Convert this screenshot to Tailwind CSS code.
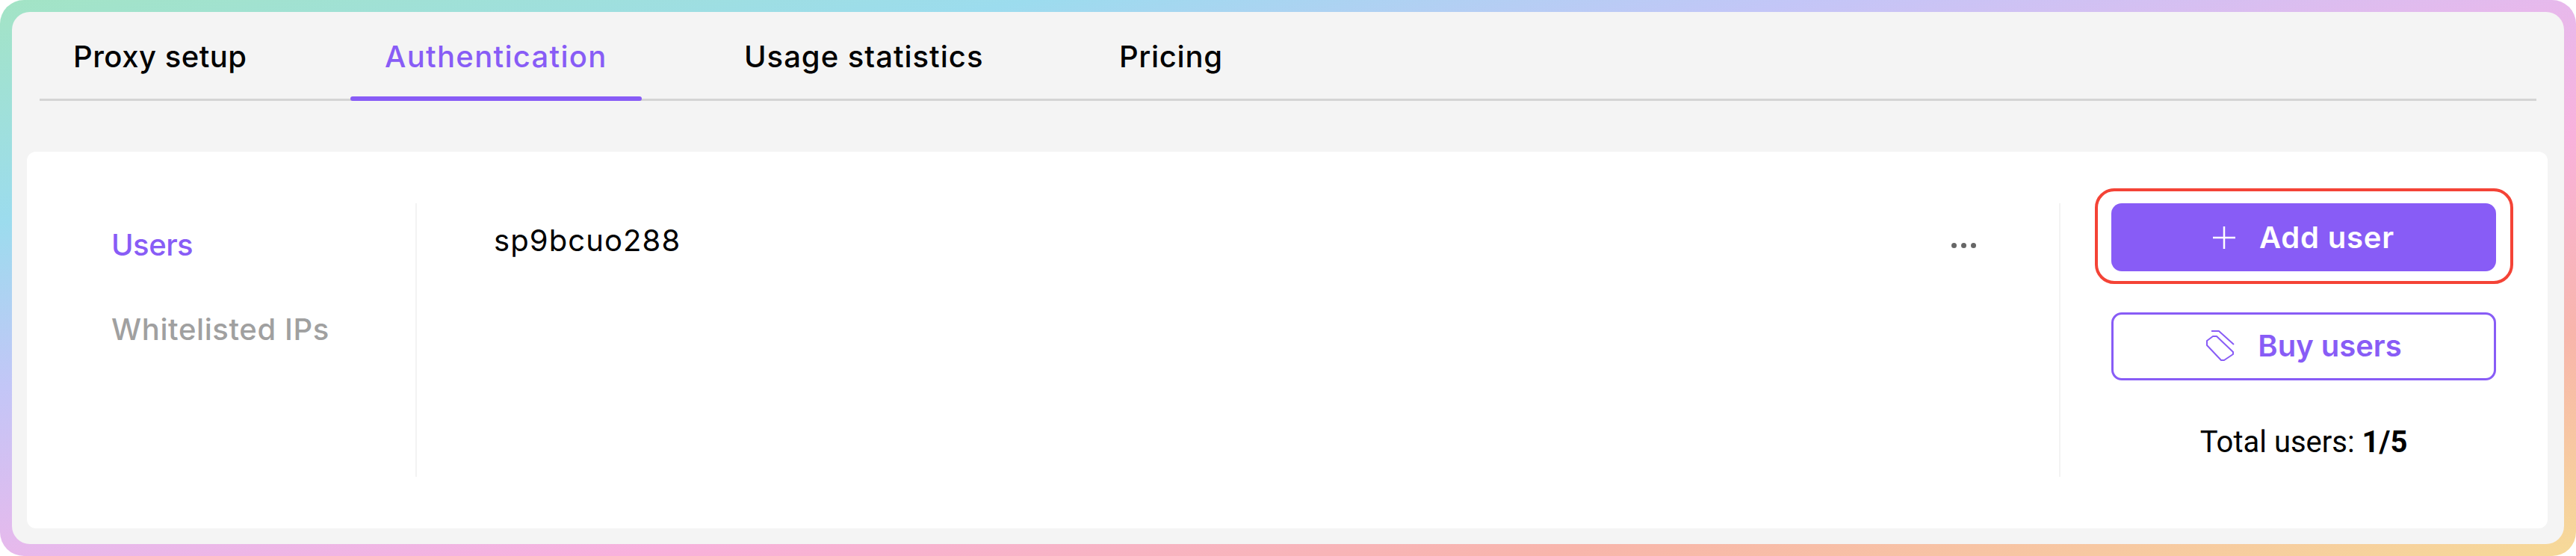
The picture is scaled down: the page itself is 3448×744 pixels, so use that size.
<!doctype html>
<html lang="en"><head><meta charset="utf-8"><script src="https://cdn.jsdelivr.net/npm/@tailwindcss/browser@4"></script><title>Authentication</title></head>
<body class="m-0">
<div class="w-[3448px] h-[744px] p-4 rounded-[32px] bg-[linear-gradient(to_bottom_right,#a3e4c5_0%,#9cdcee_20%,#c3c6f7_35%,#e7b9ec_50%,#f8b1dc_62%,#f8b5ab_80%,#f6da98_100%)] font-['Inter',sans-serif]">
  <div class="w-full h-full rounded-[24px] bg-[#f4f4f4] flex flex-col">
    <div class="h-[119px] mx-[37px] flex gap-[92px] border-b-[3px] border-[#d4d4d4] text-[40px] leading-[60px] font-medium whitespace-nowrap">
      <div class="w-[324px] pl-[45px] pt-[30px] text-black tracking-[0.5px]">Proxy setup</div>
      <div class="relative w-[390px] pl-[46px] pt-[30px] text-[#885cf6] tracking-[1.3px]">Authentication<div class="absolute left-0 right-0 -bottom-[3px] h-[6px] rounded-full bg-[#885cf6]"></div></div>
      <div class="w-[412px] pl-[45px] pt-[30px] text-black tracking-[1px]">Usage statistics</div>
      <div class="pl-[43px] pt-[30px] text-black tracking-[0.7px]">Pricing</div>
    </div>
    <div class="mt-[68px] mx-5 h-[504px] bg-white rounded-[12px] flex py-[69px] w-[3374px]">
      <div class="w-[520px] shrink-0 pl-[113px] pt-[26px] flex flex-col gap-[53px] text-[40px] font-medium">
        <div class="h-[60px] leading-[60px] text-[#885cf6] tracking-[-0.5px]">Users</div>
        <div class="h-[60px] leading-[60px] text-[#a0a0a0] tracking-[0.6px]">Whitelisted IPs</div>
      </div>
      <div class="flex-1 border-x-2 border-[#f3f3f3] pl-[103px] pr-[111px] pt-[20px] flex justify-between items-start">
        <div class="h-[60px] leading-[60px] text-[40px] text-black tracking-[1.1px]">sp9bcuo288</div>
        <div class="flex gap-[6px] mt-[33px]">
          <span class="w-[7px] h-[7px] rounded-full bg-[#666666]"></span><span class="w-[7px] h-[7px] rounded-full bg-[#666666]"></span><span class="w-[7px] h-[7px] rounded-full bg-[#666666]"></span>
        </div>
      </div>
      <div class="w-[652px] shrink-0 pl-[68px] pr-[69px] flex flex-col">
        <div class="relative h-[91px] rounded-[14px] bg-[#885cf6] flex items-center justify-center gap-[32px] text-white text-[40px] font-semibold tracking-[0.8px]">
          <div class="absolute -left-[22px] -right-[23px] -top-[20px] -bottom-[17px] border-4 border-[#f44336] rounded-[26px]"></div>
          <svg width="30" height="30" viewBox="0 0 30 30" fill="none" stroke="white" stroke-width="2.5"><path d="M15 0V30M0 15H30"/></svg>
          <span>Add user</span>
        </div>
        <div class="mt-[55px] h-[91px] rounded-[14px] border-[3px] border-[#885cf6] bg-white flex items-center justify-center gap-[30px] pb-[2px] text-[#885cf6] text-[40px] font-semibold tracking-[0px]">
          <svg width="40" height="43" viewBox="15 32 40 43" fill="none" stroke="#885cf6" stroke-width="2" stroke-linejoin="round"><path d="M17 47L25 41H30L52 62V65L40 73H36L17 53ZM23 34H33L53 52"/></svg>
          <span>Buy users</span>
        </div>
        <div class="mt-[53px] h-[60px] leading-[60px] text-center text-[40px] text-black font-['Roboto',sans-serif]">Total users: <b class="font-bold">1/5</b></div>
      </div>
    </div>
  </div>
</div>
</body></html>
